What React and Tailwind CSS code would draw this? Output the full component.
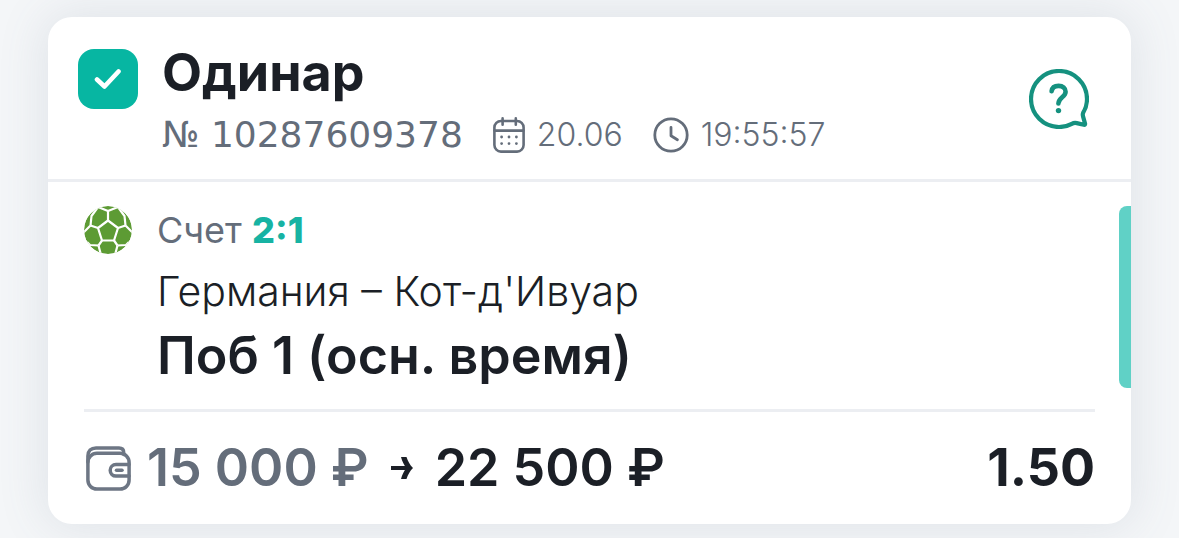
import { useState } from "react";

const CalendarIcon = () => (
  <svg viewBox="0 0 32 36" className="h-9 w-8 shrink-0" fill="none" stroke="currentColor" strokeWidth="2.6" strokeLinecap="round" aria-hidden="true">
    <rect x="1.4" y="4" width="29.2" height="30.6" rx="6.5" />
    <path d="M1.5 13.6h29M9.6 1.4v6.4M22.8 1.4v6.4" />
    <path d="M8.6 20h.01M16 20h.01M23.4 20h.01M8.6 26.6h.01M16 26.6h.01M23.4 26.6h.01" strokeWidth="2.8" />
  </svg>
);

const ClockIcon = () => (
  <svg viewBox="0 0 36 36" className="size-9 shrink-0" fill="none" stroke="currentColor" strokeWidth="2.8" strokeLinecap="round" strokeLinejoin="round" aria-hidden="true">
    <circle cx="18" cy="18" r="16.2" />
    <path d="M18 10.4v8.4l6.4 4" />
  </svg>
);

const HelpIcon = () => (
  <svg viewBox="0 0 60 60" className="size-[60px]" fill="none" stroke="currentColor" strokeWidth="4.2" strokeLinecap="round" strokeLinejoin="round" aria-hidden="true">
    <path d="M54.2 43.6C56.7 39.6 58 34.8 58 30A28 28 0 1 0 30 58c5 0 8.8-1 12.8-3.2 1.8-1 3-1.2 5-.7l7 1.7c1 .2 1.5-.4 1.2-1.4l-1.9-6.8c-.5-1.7-.5-2.7.1-4Z" />
    <path d="M22.6 22.3c.5-3.7 3.5-5.4 7-5.4 4.3 0 7 2.2 7 5.8 0 5.3-7.2 5.8-7.2 11.8" strokeWidth="4.6" />
    <circle cx="29.5" cy="41.6" r="2.7" fill="currentColor" stroke="none" />
  </svg>
);

const BallIcon = () => (
  <svg viewBox="0 0 48 48" className="size-12 shrink-0" aria-hidden="true">
    <defs>
      <clipPath id="ball">
        <circle cx="24" cy="24" r="24" />
      </clipPath>
    </defs>
    <g clipPath="url(#ball)">
      <circle cx="24" cy="24" r="24" fill="#5d9b34" />
      <g fill="none" stroke="#fff" strokeWidth="2.2" strokeLinejoin="round">
        <path d="M24 14.5 34 22 30 34.5H18L14 22Z" />
        <path d="M24 14.5V5M34 22l7.5-2.5M30 34.5l3.5 5M18 34.5l-3.500 5M14 22 6.500 19.500" />
        <path d="M24 5 14 1M24 5 34 1" />
        <path d="M6.500 19.500 7.500 10 14 1M41.500 19.500 40.500 10 34 1M6.500 19.500-1 27M41.500 19.500l7.500 7.500" />
        <path d="M3 36l3 3 8.500.5M45 36l-3 3-8.500.5" />
        <path d="M14.500 39.500 17 49M33.500 39.500 31 49" />
      </g>
    </g>
  </svg>
);

const WalletIcon = () => (
  <svg viewBox="0 0 45 45" className="size-[45px] shrink-0" fill="none" stroke="currentColor" strokeWidth="3.5" strokeLinecap="round" strokeLinejoin="round" aria-hidden="true">
    <rect x="1.9" y="7.3" width="41.2" height="35.8" rx="9" />
    <path d="M1.9 16V10C1.9 5 5 1.9 10 1.9h23c3 0 4.7 1.8 4.7 4.5v2" />
    <path d="M43 18.5H30a5.8 5.8 0 0 0 0 11.6h13" />
    <path d="M30.5 24.3H36" />
  </svg>
);

const ArrowIcon = () => (
  <svg viewBox="0 0 22 22" className="size-[22px] shrink-0" aria-hidden="true">
    <path d="M0 9h16v4H0Z" fill="currentColor" />
    <path d="M10 0h5.500c1.500 4.500 3.500 8 6.500 11-3 3-5 6.500-6.500 11H10c1.200-4.400 3-8 5.500-11C13 8 11.200 4.400 10 0Z" fill="currentColor" />
  </svg>
);

const App = () => {
  const [checked, setChecked] = useState(true);

  return (
    <main className="min-h-screen bg-[#f4f6f8] px-12 pt-[17px] pb-[14px] font-['Inter',sans-serif] text-[#1b1f26]">
      <article className="overflow-hidden rounded-3xl bg-white shadow-[0_0_48px_4px_rgba(90,105,130,0.13)]">
        <header className="flex items-start border-b-3 border-[#eceef2] pt-7 pr-[42px] pb-6 pl-[30px]">
          <div className="mt-1 grid size-[60px] shrink-0 place-items-center">
            <input
              id="bet"
              type="checkbox"
              checked={checked}
              onChange={() => setChecked(!checked)}
              className="col-start-1 row-start-1 size-[60px] appearance-none rounded-2xl bg-[#c9d0d8] checked:bg-[#07b6a2]"
            />
            <svg viewBox="0 0 28 22" className="pointer-events-none col-start-1 row-start-1 h-[22px] w-7" fill="none" stroke="#fff" strokeWidth="4.6" strokeLinecap="round" strokeLinejoin="round" aria-hidden="true">
              <path d="M3 11.5 10.5 18.5 24.5 3.500" />
            </svg>
          </div>

          <div className="ml-6 grow">
            <label htmlFor="bet" className="block text-[52px] leading-14 font-bold">
              Одинар
            </label>
            <div className="mt-[14px] flex items-center gap-[30px] text-[32px] leading-10 text-[#646d7a]">
              <p className="font-['DejaVu_Sans',sans-serif] text-4xl leading-10">№ 10287609378</p>
              <p className="flex items-center gap-3 font-light">
                <CalendarIcon />
                20.06
              </p>
              <p className="flex items-center gap-3 font-light">
                <ClockIcon />
                19:55:57
              </p>
            </div>
          </div>

          <button type="button" aria-label="Помощь" className="mt-6 text-[#15917f]">
            <HelpIcon />
          </button>
        </header>

        <section className="flex items-stretch pt-6 pl-9">
          <BallIcon />
          <div className="ml-[25px] grow">
            <p className="text-4xl leading-12 text-[#646d7a]">
              Счет <span className="font-extrabold text-[#17b3a3]">2:1</span>
            </p>
            <p className="mt-[13px] text-[41px] leading-12 font-light">Германия – Кот-д'Ивуар</p>
            <h2 className="mt-[9px] text-[52px] leading-16 font-semibold">Поб 1 (осн. время)</h2>
          </div>
          <div className="w-3 rounded-l-lg bg-[#60d1c6]" />
        </section>

        <footer className="mx-9 mt-[21px] flex items-center border-t-3 border-[#eceef2] py-6 text-[52px] leading-16 font-semibold">
          <span className="pl-[2px] text-[#6d7684]">
            <WalletIcon />
          </span>
          <p className="ml-4 flex items-center gap-[22px]">
            <span className="text-[#646d7a]">15 000 ₽</span>
            <ArrowIcon />
            <span>22 500 ₽</span>
          </p>
          <p className="ml-auto font-bold">1.50</p>
        </footer>
      </article>
    </main>
  );
};

export default App;
